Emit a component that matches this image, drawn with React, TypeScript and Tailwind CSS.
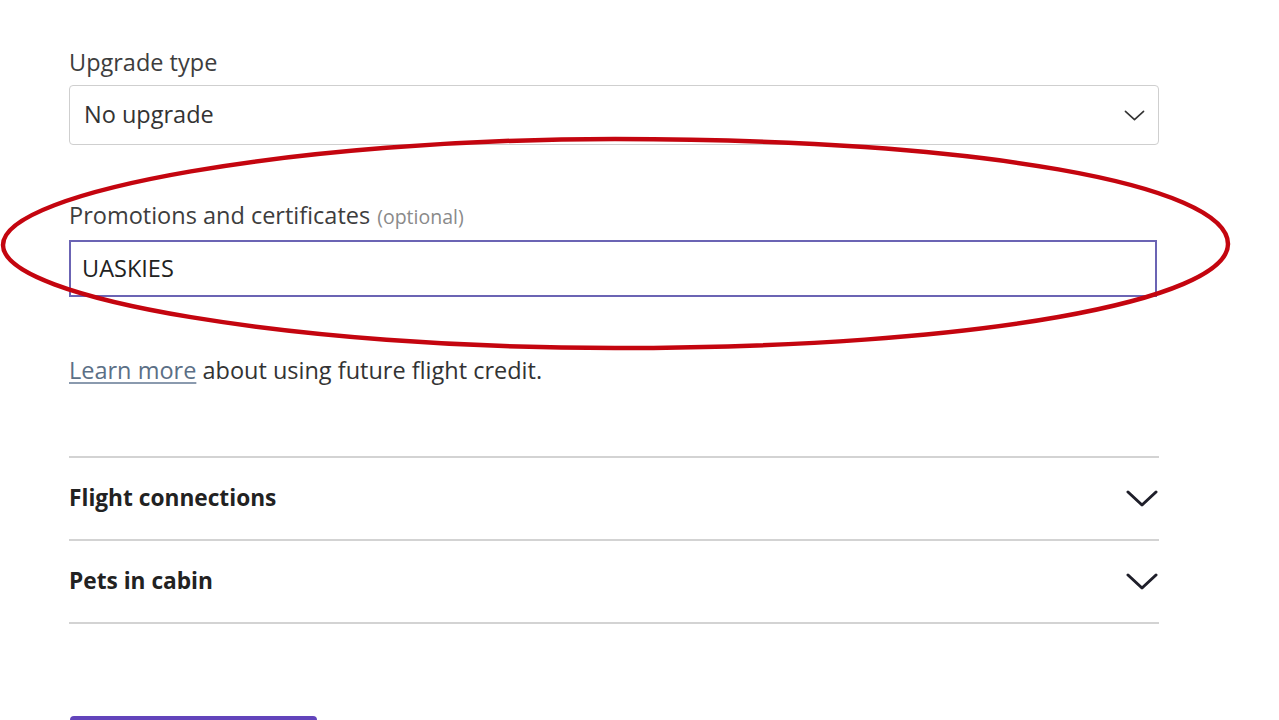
const Chevron = ({ className, strokeWidth }: { className: string; strokeWidth: number }) => (
  <svg viewBox="0 0 32 17" className={className} fill="none" stroke="currentColor" strokeWidth={strokeWidth} strokeLinecap="round" strokeLinejoin="round">
    <path d="M2 2 L16 15 L30 2" />
  </svg>
)

const App = () => {
  const rows = ["Flight connections", "Pets in cabin"]

  return (
    <main className="relative h-[720px] w-full overflow-hidden bg-white text-[#333] font-['Open_Sans',sans-serif]">
      <div className="ml-[69px] w-[1090px] pt-[48px]">
        <p className="h-[28px] text-[23.5px] leading-[28px] text-[#3d3d3d]">Upgrade type</p>
        <div className="mt-[9px] flex h-[60px] items-center justify-between rounded-[4px] border border-[#cfcfcf] pl-[14px] pr-[13px]">
          <span className="text-[23.5px] text-[#333]">No upgrade</span>
          <Chevron className="h-[11px] w-[21px] text-[#333]" strokeWidth={2.5} />
        </div>

        <p className="mt-[56px] flex h-[28px] items-baseline gap-[7px] text-[23.5px] leading-[28px] text-[#3d3d3d]">
          Promotions and certificates <span className="text-[19.5px] leading-[28px] text-[#8a8a8a]">(optional)</span>
        </p>
        <div className="mt-[11px] flex h-[57px] w-[1088px] items-center border-2 border-[#6b64b4] pl-[11px]">
          <span className="text-[23.5px] text-[#222]">UASKIES</span>
        </div>

        <p className="mt-[59px] h-[28px] text-[23.5px] leading-[28px] text-[#333]">
          <a className="text-[#5b6f86] underline underline-offset-[3px] decoration-[#8a9aae]">Learn more</a> about using future flight credit.
        </p>

        <div className="mt-[72px]">
          {rows.map((row) => (
            <div key={row} className="flex h-[83px] items-center justify-between border-t-2 border-[#d3d3d3]">
              <span className="text-[22.7px] font-bold text-[#222]">{row}</span>
              <Chevron className="mr-[1px] h-[17px] w-[32px] text-[#1f1f2a]" strokeWidth={3} />
            </div>
          ))}
          <div className="border-t-2 border-[#d3d3d3]" />
        </div>

        <button className="ml-[1px] mt-[92px] h-[48px] w-[247px] rounded-[4px] bg-[#6244bb]" />
      </div>

      <svg className="pointer-events-none absolute left-0 top-0" width="1279" height="720" viewBox="0 0 1279 720" fill="none">
        <path
          d="M615 139 C 980 139, 1228 185, 1228 244 C 1228 300, 980 348, 615 348 C 300 348, 3 300, 3 245 C 3 190, 300 139, 615 139 Z"
          stroke="#c4050f"
          strokeWidth="4.5"
        />
      </svg>
    </main>
  )
}

export default App
